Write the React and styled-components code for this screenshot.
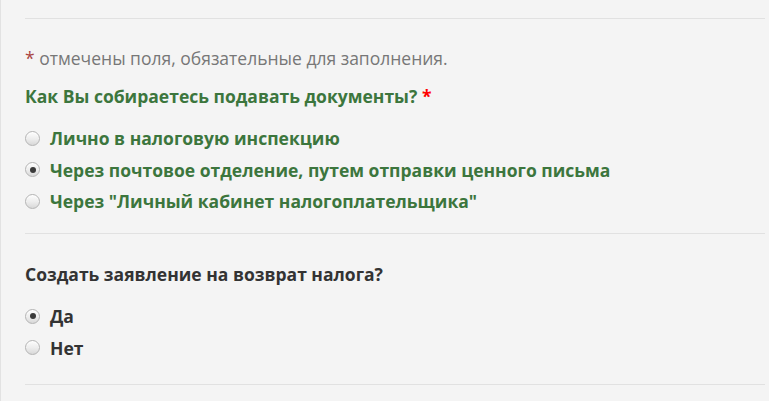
import styled, { createGlobalStyle } from "styled-components";

const GlobalStyle = createGlobalStyle`
  html, body {
    margin: 0;
    padding: 0;
    background: #f4f4f4;
  }
  body {
    font-family: "Open Sans", "Liberation Sans", sans-serif;
  }
`;

const requiredNote = "отмечены поля, обязательные для заполнения.";

const deliveryOptions = [
  { label: "Лично в налоговую инспекцию", checked: false },
  { label: "Через почтовое отделение, путем отправки ценного письма", checked: true },
  { label: "Через \"Личный кабинет налогоплательщика\"", checked: false },
];

const refundOptions = [
  { label: "Да", checked: true },
  { label: "Нет", checked: false },
];

export default function App() {
  return (
    <>
      <GlobalStyle />
      <StyledPage>
        <StyledDivider />
        <StyledNote>
          <StyledNoteStar>*</StyledNoteStar> {requiredNote}
        </StyledNote>
        <StyledQuestion green>
          Как Вы собираетесь подавать документы? <StyledRequired>*</StyledRequired>
        </StyledQuestion>
        <StyledOptions>
          {deliveryOptions.map((option, index) => (
            <StyledOption key={index} green>
              <StyledRadio checked={option.checked} />
              {option.label}
            </StyledOption>
          ))}
        </StyledOptions>
        <StyledDivider />
        <StyledQuestion>Создать заявление на возврат налога?</StyledQuestion>
        <StyledOptions last>
          {refundOptions.map((option, index) => (
            <StyledOption key={index}>
              <StyledRadio checked={option.checked} />
              {option.label}
            </StyledOption>
          ))}
        </StyledOptions>
        <StyledDivider />
      </StyledPage>
    </>
  );
}

const StyledPage = styled.div`
  box-sizing: border-box;
  width: 769px;
  height: 401px;
  overflow: hidden;
  border-left: 1px solid #e2e2e2;
  padding: 18px 4px 0 24px;
  display: flex;
  flex-direction: column;
`;
const StyledDivider = styled.div`
  height: 1px;
  background: #e1e1e1;
  flex-shrink: 0;
`;
const StyledNote = styled.div`
  margin-top: 27px;
  font-size: 17.5px;
  line-height: 24px;
  color: #777777;
`;
const StyledNoteStar = styled.span`
  color: #a94442;
`;
const StyledQuestion = styled.div`
  margin-top: ${(props) => (props.green ? "14px" : "28px")};
  font-size: 17.5px;
  line-height: 24px;
  font-weight: 700;
  color: ${(props) => (props.green ? "#3c763d" : "#333333")};
`;
const StyledRequired = styled.span`
  color: #ff0000;
`;
const StyledOptions = styled.div`
  margin-top: 18px;
  margin-bottom: ${(props) => (props.last ? "24px" : "20px")};
  display: flex;
  flex-direction: column;
  gap: 7.5px;
`;
const StyledOption = styled.label`
  display: flex;
  align-items: center;
  gap: 10px;
  height: 24px;
  font-size: 17.5px;
  font-weight: 700;
  color: ${(props) => (props.green ? "#3c763d" : "#333333")};
`;
const StyledRadio = styled.span`
  box-sizing: border-box;
  width: 15px;
  height: 15px;
  border-radius: 50%;
  border: 1px solid #b4b4b4;
  background: linear-gradient(to bottom, #fdfdfd 0%, #ececec 55%, #d8d8d8 100%);
  box-shadow: inset 0 1px 1px rgba(255, 255, 255, 0.8);
  display: flex;
  align-items: center;
  justify-content: center;
  flex-shrink: 0;
  &::after {
    content: "";
    display: ${(props) => (props.checked ? "block" : "none")};
    width: 6px;
    height: 6px;
    border-radius: 50%;
    background: #3a3a3a;
  }
`;
